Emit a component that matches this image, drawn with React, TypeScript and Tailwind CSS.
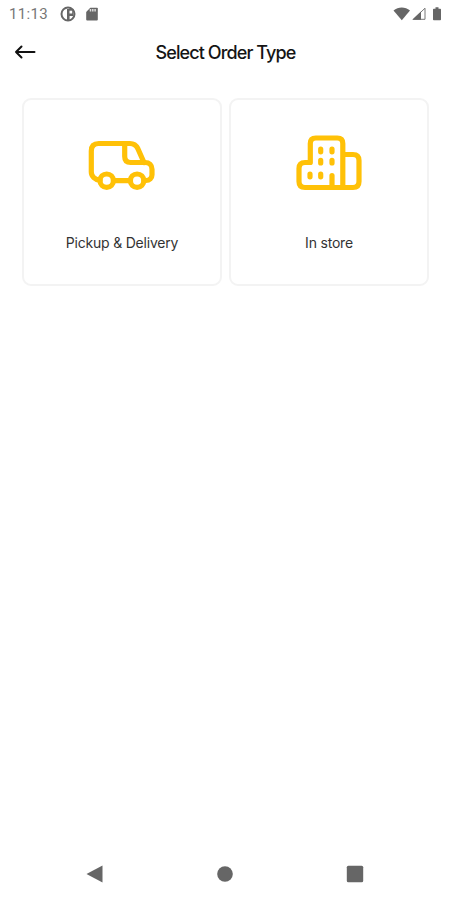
function StatusBar() {
  return (
    <header className="flex h-7 items-center justify-between pl-[9px] pr-2 text-[#666]">
      <div className="flex items-center">
        <span className="w-[51px] font-[Roboto,sans-serif] text-[15px] leading-7 tracking-[0.35px] text-[#777]">11:13</span>
        <svg className="size-4" viewBox="0 0 16 16" fill="none">
          <circle cx="8" cy="8" r="6.500" stroke="#666" strokeWidth="2" />
          <path d="M7 3h6.500v7H9.600v4H7z" fill="#666" />
          <path d="M9.500 4.700h2.700v2.800H9.500z" fill="#fff" />
        </svg>
        <svg className="ml-2.5 h-[14px] w-3" viewBox="0 0 12 14" fill="#666">
          <path d="M4.300.7H11a.8.8 0 0 1 .8.8v11a.9.9 0 0 1-.9.9H1.100a.9.9 0 0 1-.9-.9V5z" />
          <path d="M4.500 2v2.500M6.800 2v2.500M9.100 2v2.500" stroke="#ddd" strokeWidth="1.500" />
        </svg>
      </div>
      <svg className="h-4 w-[50px]" viewBox="0 0 50 16" fill="#666">
        <path d="M1.500 4.400C6.300.5 13.200.5 18 4.400L9.800 14.200z" />
        <path d="M33 2.200V13.300H21.400z" fill="none" stroke="#777" strokeWidth="1" />
        <path d="M20.200 13.800 29 5.500v8.300z" />
        <path d="M43.500 1.300h3v1.400h1.700c.5 0 .8.3.8.8v10c0 .5-.3.8-.8.8h-6.400c-.5 0-.8-.3-.8-.8v-10c0-.5.3-.8.8-.8h1.700z" />
      </svg>
    </header>
  );
}

function VanIcon() {
  return (
    <svg className="h-[70px] w-[85px]" viewBox="80 130 85 70" fill="none" stroke="#ffc107" strokeWidth="5.200" strokeLinecap="round" strokeLinejoin="round">
      <path d="M100 180.500C95 179.500 91.300 176.500 91.300 172V151q0-7.500 7.500-7.500H130c4 0 6 1.400 7.800 5L144 162.500" />
      <path d="M124.700 143.500V156.500q0 6 6 6H145c4.400 0 7 2.500 7 6.700v5.600c0 3.500-2.500 5.700-6 5.700h-2M113.500 180.700H130.500" />
      <circle cx="106.700" cy="180.700" r="6.700" />
      <circle cx="137.100" cy="180.700" r="6.700" />
    </svg>
  );
}

function BuildingIcon() {
  return (
    <svg className="h-[70px] w-[85px]" viewBox="287 130 85 70" fill="none" stroke="#ffc107" strokeWidth="5.200" strokeLinecap="round" strokeLinejoin="round">
      <path d="M310.300 162.500V143.500q0-5.500 5.500-5.500h21.500q5.500 0 5.500 5.500V187.500M310.300 162.500H305q-6 0-6 6v13q0 6 6 6H353q6 0 6-6v-21q0-6-6-6H343M332 175.500v12" />
      <path d="M320.700 149.200v2.600M332 149.200v2.600M320.700 160.400v2.600M332 160.400v2.600M310 174.200v2.600M320.700 174.200v2.600" />
    </svg>
  );
}

function OrderCard({ label, icon }: { label: string; icon: React.ReactNode }) {
  return (
    <button className="flex h-[188px] w-[200px] flex-col items-center rounded-[9px] border-2 border-[#f3f3f3] bg-white pt-[30px]">
      {icon}
      <span className="mt-[33px] text-[14px] leading-5 tracking-[-0.2px] text-[#333]">{label}</span>
    </button>
  );
}

export default function App() {
  return (
    <div className="flex h-[900px] w-[450px] flex-col overflow-hidden bg-white font-[Inter,sans-serif]">
      <StatusBar />
      <div className="grid h-12 grid-cols-[50px_1fr_50px] items-center">
        <button aria-label="Back" className="pl-[14px]">
          <svg className="h-4 w-[22px]" viewBox="0 0 22 16" fill="none" stroke="#111" strokeWidth="2" strokeLinecap="round" strokeLinejoin="round">
            <path d="M20.500 8H2M7.500 2.500 2 8l5.500 5.500" />
          </svg>
        </button>
        <h1 className="pl-px pt-0.5 text-center text-[18px] font-medium leading-6 tracking-[-0.9px] text-[#151515]">Select Order Type</h1>
      </div>
      <main className="flex flex-1 gap-[7px] pl-[22px] pt-[22px]">
        <OrderCard label="Pickup & Delivery" icon={<VanIcon />} />
        <OrderCard label="In store" icon={<BuildingIcon />} />
      </main>
      <nav className="flex h-[52px] items-center justify-between pl-[86px] pr-[86px]">
        <svg className="size-[18px]" viewBox="0 0 18 18" fill="#666"><path d="M.5 9 16.500.5v17z" /></svg>
        <svg className="size-[18px]" viewBox="0 0 18 18" fill="#666"><circle cx="9" cy="9" r="7.800" /></svg>
        <svg className="size-[18px]" viewBox="0 0 18 18" fill="#666"><rect x=".8" y=".8" width="16.400" height="16.400" rx="1.500" /></svg>
      </nav>
    </div>
  );
}
